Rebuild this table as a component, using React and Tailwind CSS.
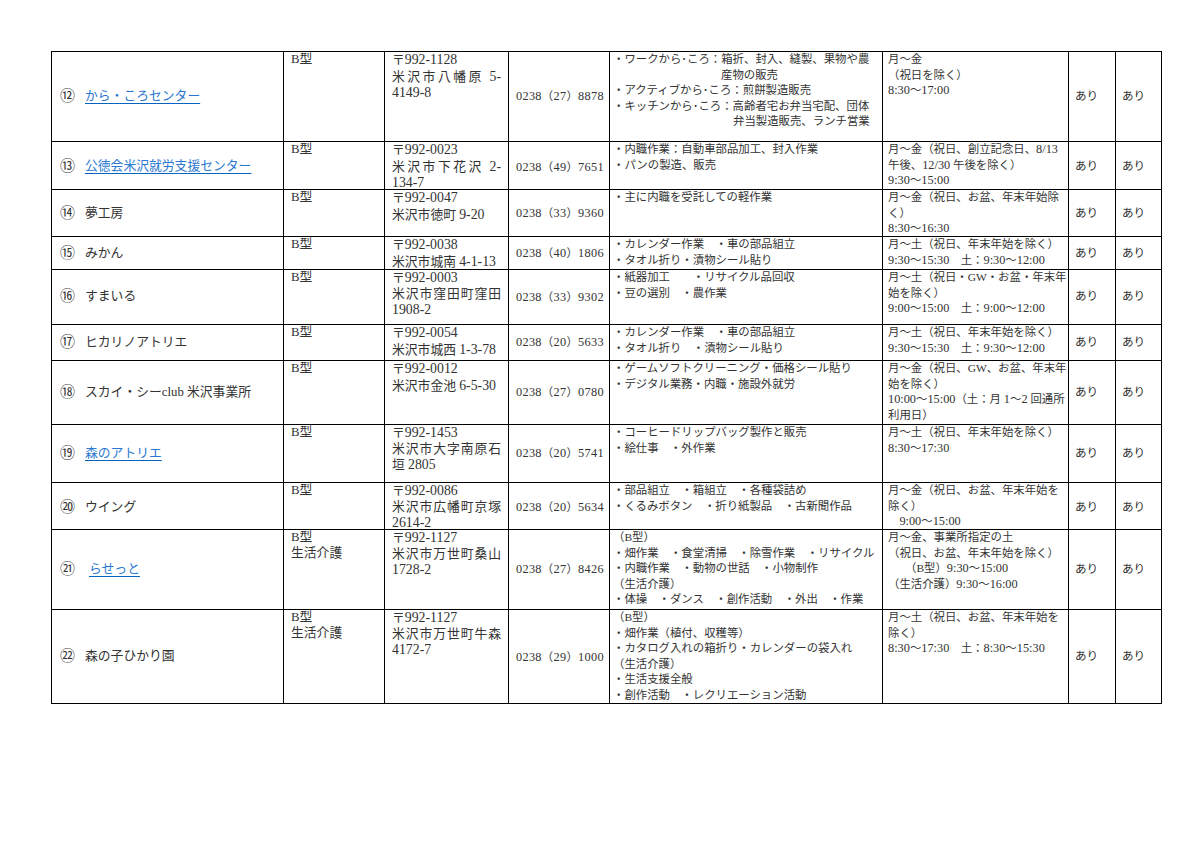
import React from "react";

const rows = [
  {
    h: "h-[90px]",
    no: "⑫",
    name: "から・ころセンター",
    link: true,
    type: ["B型"],
    addr: ["〒992-1128", "米沢市八幡原 5-", "4149-8"],
    j: [1],
    phone: "0238（27）8878",
    act: [
      { t: "・ワークから･ころ：箱折、封入、縫製、果物や農" },
      { t: "産物の販売", c: "pl-[108px]" },
      { t: "・アクティブから･ころ：煎餅製造販売" },
      { t: "・キッチンから･ころ：高齢者宅お弁当宅配、団体" },
      { t: "弁当製造販売、ランチ営業", c: "pl-[120px]" },
    ],
    hours: ["月～金", "（祝日を除く）", "8:30～17:00"],
  },
  {
    h: "h-[48px]",
    no: "⑬",
    name: "公徳会米沢就労支援センター",
    link: true,
    type: ["B型"],
    addr: ["〒992-0023", "米沢市下花沢 2-", "134-7"],
    j: [1],
    phone: "0238（49）7651",
    act: [{ t: "・内職作業：自動車部品加工、封入作業" }, { t: "・パンの製造、販売" }],
    hours: ["月～金（祝日、創立記念日、8/13", "午後、12/30 午後を除く）", "9:30～15:00"],
  },
  {
    h: "h-[47px]",
    no: "⑭",
    name: "夢工房",
    type: ["B型"],
    addr: ["〒992-0047", "米沢市徳町 9-20"],
    j: [],
    phone: "0238（33）9360",
    act: [{ t: "・主に内職を受託しての軽作業" }],
    hours: ["月～金（祝日、お盆、年末年始除", "く）", "8:30～16:30"],
  },
  {
    h: "h-[33px]",
    no: "⑮",
    name: "みかん",
    type: ["B型"],
    addr: ["〒992-0038", "米沢市城南 4-1-13"],
    j: [],
    phone: "0238（40）1806",
    act: [{ t: "・カレンダー作業　・車の部品組立" }, { t: "・タオル折り・漬物シール貼り" }],
    hours: ["月～土（祝日、年末年始を除く）", "9:30～15:30　土：9:30～12:00"],
  },
  {
    h: "h-[55px]",
    no: "⑯",
    name: "すまいる",
    type: ["B型"],
    addr: ["〒992-0003", "米沢市窪田町窪田", "1908-2"],
    j: [1],
    phone: "0238（33）9302",
    act: [{ t: "・紙器加工　　・リサイクル品回収" }, { t: "・豆の選別　・農作業" }],
    hours: ["月～土（祝日・GW・お盆・年末年", "始を除く）", "9:00～15:00　土：9:00～12:00"],
  },
  {
    h: "h-[36px]",
    no: "⑰",
    name: "ヒカリノアトリエ",
    type: ["B型"],
    addr: ["〒992-0054", "米沢市城西 1-3-78"],
    j: [],
    phone: "0238（20）5633",
    act: [{ t: "・カレンダー作業　・車の部品組立" }, { t: "・タオル折り　・漬物シール貼り" }],
    hours: ["月～土（祝日、年末年始を除く）", "9:30～15:30　土：9:30～12:00"],
  },
  {
    h: "h-[64px]",
    no: "⑱",
    name: "スカイ・シーclub 米沢事業所",
    type: ["B型"],
    addr: ["〒992-0012", "米沢市金池 6-5-30"],
    j: [],
    phone: "0238（27）0780",
    act: [{ t: "・ゲームソフトクリーニング・価格シール貼り" }, { t: "・デジタル業務・内職・施設外就労" }],
    hours: ["月～金（祝日、GW、お盆、年末年", "始を除く）", "10:00～15:00（土：月 1～2 回通所", "利用日）"],
  },
  {
    h: "h-[58px]",
    no: "⑲",
    name: "森のアトリエ",
    link: true,
    type: ["B型"],
    addr: ["〒992-1453", "米沢市大字南原石", "垣 2805"],
    j: [1],
    phone: "0238（20）5741",
    act: [{ t: "・コーヒードリップバッグ製作と販売" }, { t: "・絵仕事　・外作業" }],
    hours: ["月～土（祝日、年末年始を除く）", "8:30～17:30"],
  },
  {
    h: "h-[47px]",
    no: "⑳",
    name: "ウイング",
    type: ["B型"],
    addr: ["〒992-0086", "米沢市広幡町京塚", "2614-2"],
    j: [1],
    phone: "0238（20）5634",
    act: [{ t: "・部品組立　・箱組立　・各種袋詰め" }, { t: "・くるみボタン　・折り紙製品　・古新聞作品" }],
    hours: ["月～金（祝日、お盆、年末年始を", "除く）", "　9:00～15:00"],
  },
  {
    h: "h-[80px]",
    no: "㉑",
    name: "らせっと",
    link: true,
    extra: true,
    type: ["B型", "生活介護"],
    addr: ["〒992-1127", "米沢市万世町桑山", "1728-2"],
    j: [1],
    phone: "0238（27）8426",
    act: [
      { t: "（B型）" },
      { t: "・畑作業　・食堂清掃　・除雪作業　・リサイクル" },
      { t: "・内職作業　・動物の世話　・小物制作" },
      { t: "（生活介護）" },
      { t: "・体操　・ダンス　・創作活動　・外出　・作業" },
    ],
    hours: ["月～金、事業所指定の土", "（祝日、お盆、年末年始を除く）", "　　（B型）9:30～15:00", "（生活介護）9:30～16:00"],
  },
  {
    h: "h-[94px]",
    no: "㉒",
    name: "森の子ひかり園",
    type: ["B型", "生活介護"],
    addr: ["〒992-1127", "米沢市万世町牛森", "4172-7"],
    j: [1],
    phone: "0238（29）1000",
    act: [
      { t: "（B型）" },
      { t: "・畑作業（植付、収穫等）" },
      { t: "・カタログ入れの箱折り・カレンダーの袋入れ" },
      { t: "（生活介護）" },
      { t: "・生活支援全般" },
      { t: "・創作活動　・レクリエーション活動" },
    ],
    hours: ["月～土（祝日、お盆、年末年始を", "除く）", "8:30～17:30　土：8:30～15:30"],
  },
];

function T({ s }) {
  const parts = s.split(/([0-9:\-\/]+)/);
  return (
    <>
      {parts.map((p, i) =>
        i % 2 === 1 ? (
          <span key={i} className="text-[1.08em]">
            {p}
          </span>
        ) : (
          <React.Fragment key={i}>{p}</React.Fragment>
        )
      )}
    </>
  );
}

const cell = "border-l border-t border-black overflow-visible";

function Row({ r }) {
  return (
    <div className={`grid grid-cols-[232px_101px_124px_101px_273px_186px_47px_46px] ${r.h}`}>
      <div className={`${cell} flex items-center pl-[8px] text-[12.8px] leading-[15.6px] whitespace-nowrap`}>
        <span className="inline-block w-[25px] text-[15px] leading-[15.6px]">{r.no}</span>
        {r.link ? (
          <span
            className={`text-[#2b78d0] underline decoration-[#0563c1] underline-offset-[3px] ${
              r.extra ? "ml-[4px]" : ""
            }`}
          >
            {r.name}
          </span>
        ) : (
          <span>{r.name}</span>
        )}
      </div>
      <div className={`${cell} pl-[7px] text-[12.8px] leading-[15.6px]`}>
        {r.type.map((t, i) => (
          <div key={i} className="whitespace-nowrap">
            {t}
          </div>
        ))}
      </div>
      <div className={`${cell} pl-[7px] pr-[7px] text-[12.8px] leading-[15.6px]`}>
        {r.addr.map((t, i) => (
          <div
            key={i}
            className={r.j.includes(i) ? "text-justify [text-align-last:justify] whitespace-nowrap" : "whitespace-nowrap"}
          >
            <T s={t} />
          </div>
        ))}
      </div>
      <div className={`${cell} flex items-center pl-[7px] text-[11.4px] tracking-[0.3px] whitespace-nowrap`}>
        <span>
          <T s={r.phone} />
        </span>
      </div>
      <div className={`${cell} pl-[3px] text-[11.4px] leading-[15.6px]`}>
        {r.act.map((a, i) => (
          <div key={i} className={`whitespace-nowrap ${a.c || ""}`}>
            {a.t}
          </div>
        ))}
      </div>
      <div className={`${cell} pl-[5px] text-[11.4px] leading-[15.6px]`}>
        {r.hours.map((t, i) => (
          <div key={i} className="whitespace-nowrap">
            <T s={t} />
          </div>
        ))}
      </div>
      <div className={`${cell} flex items-center pl-[6px] text-[11.6px]`}>あり</div>
      <div className={`${cell} flex items-center pl-[6px] text-[11.6px]`}>あり</div>
    </div>
  );
}

export default function App() {
  return (
    <div className="w-[1200px] h-[849px] bg-white pt-[51px] pl-[51px] text-[#333] font-['Liberation_Serif','Noto_Sans_CJK_JP',serif]">
      <div className="w-[1111px] border-r border-b border-black">
        {rows.map((r, i) => (
          <Row key={i} r={r} />
        ))}
      </div>
    </div>
  );
}
